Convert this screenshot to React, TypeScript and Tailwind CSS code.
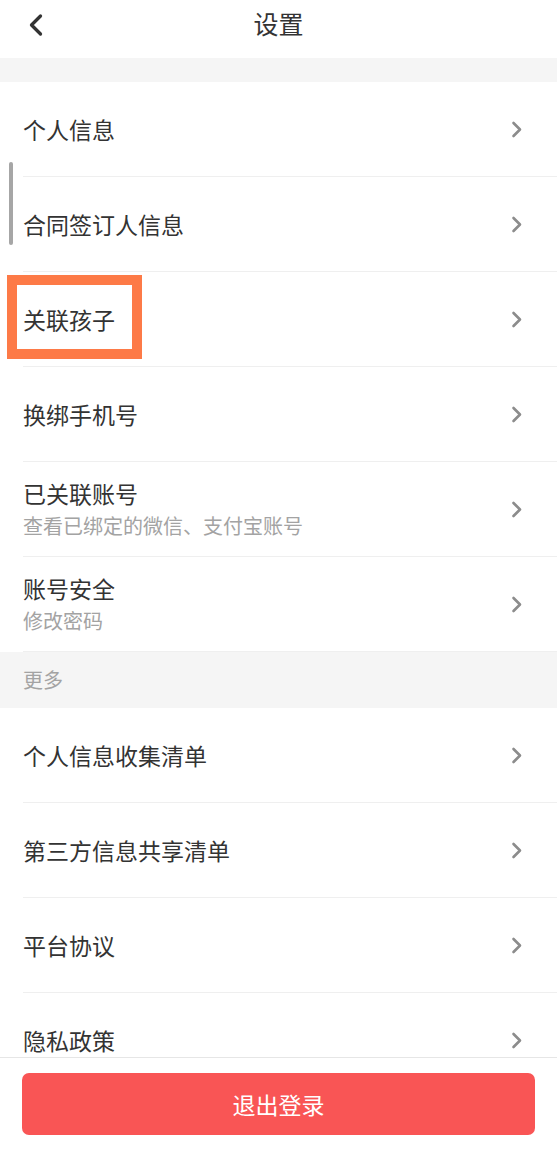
import { ChevronLeft } from "lucide-react";

type Item = { title: string; sub?: string };

const accountItems: Item[] = [
  { title: "个人信息" },
  { title: "合同签订人信息" },
  { title: "关联孩子" },
  { title: "换绑手机号" },
  { title: "已关联账号", sub: "查看已绑定的微信、支付宝账号" },
  { title: "账号安全", sub: "修改密码" },
];

const moreItems: Item[] = [
  { title: "个人信息收集清单" },
  { title: "第三方信息共享清单" },
  { title: "平台协议" },
  { title: "隐私政策" },
];

const Arrow = () => (
  <svg width="12" height="17" viewBox="0 0 12 17" fill="none" className="shrink-0">
    <path d="M2.5 2 L9 8.5 L2.5 15" stroke="#8c8c8c" strokeWidth="2.6" strokeLinecap="round" strokeLinejoin="round" />
  </svg>
);

const Row = ({ item, marked }: { item: Item; marked?: boolean }) => (
  <div className="relative h-[95px] shrink-0 bg-white pl-[23px]">
    <div className="flex h-full items-center justify-between border-b border-[#efefef] pr-[34px]">
      <div className="flex flex-col">
        <span className={`text-[23px] text-[#333333] ${item.sub ? "leading-[32px]" : "leading-[30px]"}`}>
          {item.title}
        </span>
        {item.sub && (
          <span className="mt-[2px] text-[20px] leading-[30px] text-[#a3a3a3]">{item.sub}</span>
        )}
      </div>
      <Arrow />
    </div>
    {/* 标注框 */}
    {marked && (
      <div className="absolute left-[7px] top-[3px] h-[84px] w-[135px] border-[10px] border-[#fd7a47]" />
    )}
  </div>
);

const App = () => {
  return (
    <div
      className="flex h-[1153px] w-full flex-col overflow-hidden bg-white"
      style={{ fontFamily: '"Noto Sans CJK SC", "Noto Sans", sans-serif' }}
    >
      <header className="relative flex h-[58px] shrink-0 items-center justify-center bg-white pb-[11px]">
        <ChevronLeft className="absolute left-[18px] top-[7px] h-[36px] w-[36px] text-[#333333]" strokeWidth={2.2} />
        <h1 className="text-[25px] leading-none text-[#333333]">设置</h1>
      </header>

      <main className="relative flex flex-1 flex-col overflow-hidden bg-[#f5f5f5]">
        <div className="h-[24px] shrink-0" />
        {accountItems.map((item) => (
          <Row key={item.title} item={item} marked={item.title === "关联孩子"} />
        ))}
        <div className="flex h-[56px] shrink-0 items-center pl-[23px] text-[20px] text-[#a3a3a3]">更多</div>
        {moreItems.map((item) => (
          <Row key={item.title} item={item} />
        ))}
        {/* 滚动条 */}
        <div className="absolute left-[9px] top-[104px] h-[83px] w-[4px] rounded-full bg-[#a6a6a6]" />
      </main>

      <footer className="shrink-0 border-t border-[#e6e6e6] bg-white px-[22px] pb-[18px] pt-[15px]">
        <button className="flex h-[62px] w-full items-center justify-center rounded-[7px] bg-[#f95555] text-[23px] text-white">
          退出登录
        </button>
      </footer>
    </div>
  );
};

export default App;
